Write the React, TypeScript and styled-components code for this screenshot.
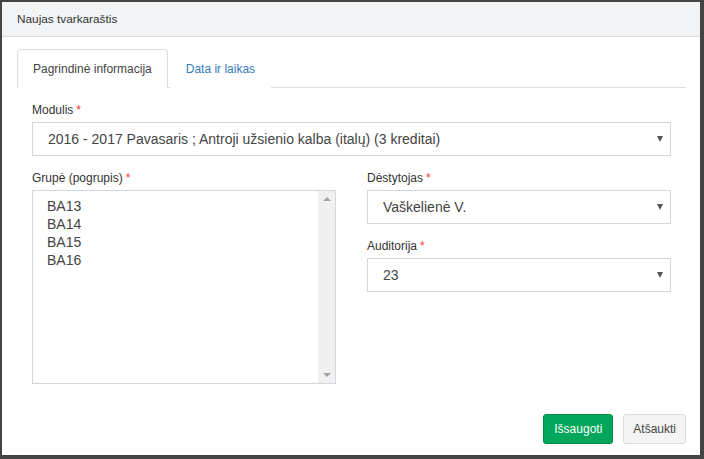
import React from "react";
import styled, { createGlobalStyle } from "styled-components";

const Global = createGlobalStyle`
  html, body { margin: 0; padding: 0; }
  body {
    background: #444;
    font-family: "Liberation Sans", Arial, sans-serif;
    color: #333;
    width: 704px;
    height: 459px;
    overflow: hidden;
  }
  * { box-sizing: border-box; }
`;

const Backdrop = styled.div`
  width: 704px;
  height: 459px;
  padding: 2px 4px 4px 2px;
`;

const Modal = styled.div`
  width: 698px;
  height: 453px;
  background: #fff;
  display: flex;
  flex-direction: column;
`;

const Header = styled.div`
  height: 35px;
  background: #f2f3f5;
  border-bottom: 1px solid #dcdcdc;
  display: flex;
  align-items: center;
  padding: 0 15px;
  font-size: 11.8px;
  color: #333;
`;

const Body = styled.div`
  padding: 12px 14px 0 15px;
`;

const TabBar = styled.div`
  display: flex;
  height: 39px;
  border-bottom: 1px solid #ddd;
`;

const Tab = styled.div<{ $active?: boolean }>`
  height: 40px;
  padding: 0 15px;
  display: flex;
  align-items: center;
  font-size: 12px;
  margin-right: 2px;
  margin-bottom: -1px;
  border: 1px solid ${(p) => (p.$active ? "#ddd" : "transparent")};
  border-bottom-color: ${(p) => (p.$active ? "#fff" : "transparent")};
  border-radius: 4px 4px 0 0;
  background: #fff;
  color: ${(p) => (p.$active ? "#444" : "#337ab7")};
`;

const Pane = styled.div`
  padding: 15px 15px 0 15px;
`;

const Group = styled.div`
  margin-bottom: 15px;
`;

const Label = styled.div`
  font-size: 12px;
  line-height: 14px;
  margin-bottom: 5px;
  color: #333;
`;

const Req = styled.span`
  color: #f33;
  margin-left: 3px;
`;

const Select = styled.div`
  height: 34px;
  border: 1px solid #d2d6de;
  display: flex;
  align-items: center;
  justify-content: space-between;
  padding: 0 7px 0 15px;
  font-size: 14px;
  color: #444;
`;

const Caret = styled.span`
  width: 0;
  height: 0;
  border-left: 3px solid transparent;
  border-right: 3px solid transparent;
  border-top: 6px solid #555;
`;

const Columns = styled.div`
  display: grid;
  grid-template-columns: 304px 304px;
  column-gap: 31px;
`;

const ListBox = styled.div`
  height: 194px;
  border: 1px solid #d2d6de;
  display: flex;
`;

const Items = styled.div`
  flex: 1;
  padding: 6px 14px;
  font-size: 14px;
  line-height: 18px;
  color: #444;
`;

const ScrollBar = styled.div`
  width: 17px;
  background: #f0f0f0;
  display: flex;
  flex-direction: column;
  justify-content: space-between;
  align-items: center;
  padding: 6px 0;
`;

const Arrow = styled.span<{ $up?: boolean }>`
  width: 0;
  height: 0;
  border-left: 4px solid transparent;
  border-right: 4px solid transparent;
  ${(p) =>
    p.$up
      ? "border-bottom: 4px solid #a3a3a3;"
      : "border-top: 4px solid #a3a3a3;"}
`;

const Footer = styled.div`
  margin-top: auto;
  display: flex;
  justify-content: flex-end;
  gap: 10px;
  padding: 0 14px 11px 0;
`;

const Button = styled.button<{ $primary?: boolean }>`
  height: 30px;
  padding: 0 ${(p) => (p.$primary ? "10px" : "9px")};
  font-family: inherit;
  font-size: 12px;
  border-radius: 3px;
  border: 1px solid ${(p) => (p.$primary ? "#008d4c" : "#ddd")};
  background: ${(p) => (p.$primary ? "#00a65a" : "#f4f4f4")};
  color: ${(p) => (p.$primary ? "#fff" : "#444")};
`;

export default function App() {
  return (
    <>
      <Global />
      <Backdrop>
        <Modal>
          <Header>Naujas tvarkaraštis</Header>
          <Body>
            <TabBar>
              <Tab $active>Pagrindinė informacija</Tab>
              <Tab>Data ir laikas</Tab>
            </TabBar>
            <Pane>
              <Group>
                <Label>
                  Modulis<Req>*</Req>
                </Label>
                <Select>
                  2016 - 2017 Pavasaris ; Antroji užsienio kalba (italų) (3 kreditai)
                  <Caret />
                </Select>
              </Group>
              <Columns>
                <div>
                  <Label>
                    Grupė (pogrupis)<Req>*</Req>
                  </Label>
                  <ListBox>
                    <Items>
                      <div>BA13</div>
                      <div>BA14</div>
                      <div>BA15</div>
                      <div>BA16</div>
                    </Items>
                    <ScrollBar>
                      <Arrow $up />
                      <Arrow />
                    </ScrollBar>
                  </ListBox>
                </div>
                <div>
                  <Group>
                    <Label>
                      Dėstytojas<Req>*</Req>
                    </Label>
                    <Select>
                      Vaškelienė V.
                      <Caret />
                    </Select>
                  </Group>
                  <Group>
                    <Label>
                      Auditorija<Req>*</Req>
                    </Label>
                    <Select>
                      23
                      <Caret />
                    </Select>
                  </Group>
                </div>
              </Columns>
            </Pane>
          </Body>
          <Footer>
            <Button $primary>Išsaugoti</Button>
            <Button>Atšaukti</Button>
          </Footer>
        </Modal>
      </Backdrop>
    </>
  );
}
